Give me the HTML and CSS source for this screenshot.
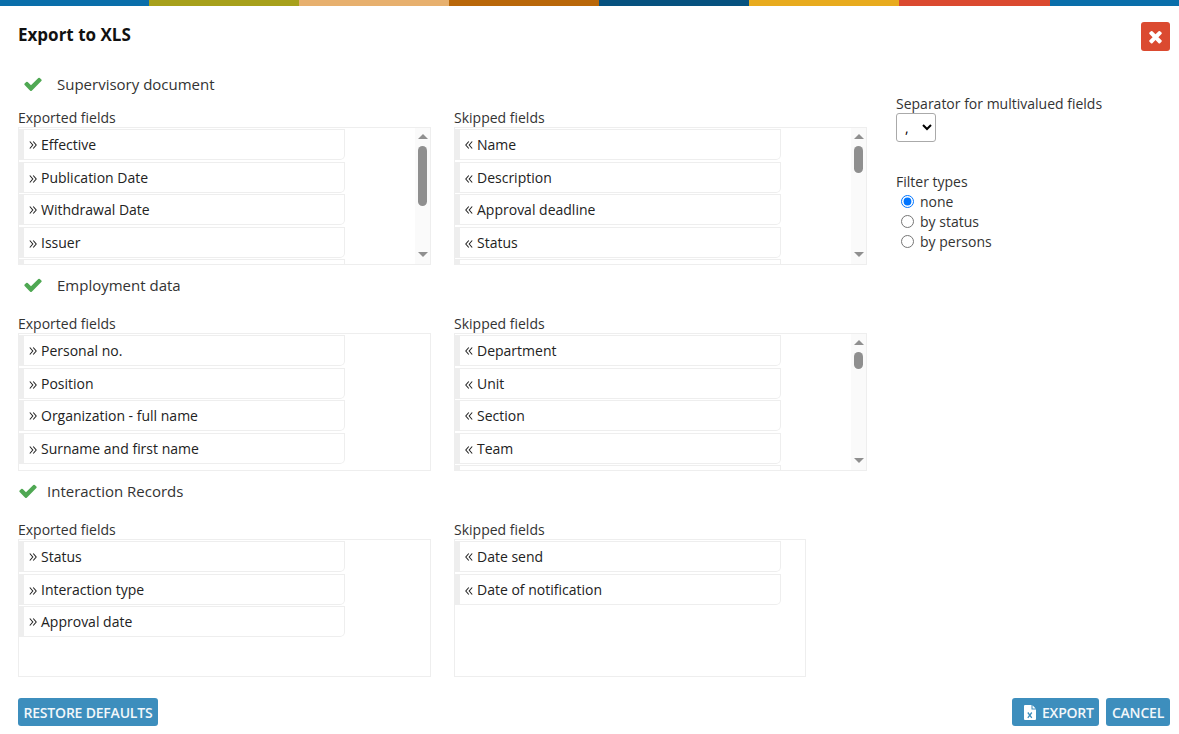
FILE: index.html
```html
<!DOCTYPE html>
<html lang="en">
<head>
<meta charset="utf-8">
<title>Export to XLS</title>
<link rel="stylesheet" href="styles.css">
</head>
<body>
<svg class="sprites" aria-hidden="true">
  <symbol id="ok" viewBox="0 0 1792 1792"><path d="M1671 566q0 40-28 68l-724 724-136 136q-28 28-68 28t-68-28l-136-136-362-362q-28-28-28-68t28-68l136-136q28-28 68-28t68 28l294 295 656-657q28-28 68-28t68 28l136 136q28 28 28 68z"/></symbol>
  <symbol id="right" viewBox="0 0 8 8"><path d="M.8 .5 3.8 4 .8 7.5M4.2 .5 7.2 4 4.2 7.5"/></symbol>
  <symbol id="left" viewBox="0 0 8 8"><path d="M3.8 .5 .8 4 3.8 7.5M7.2 .5 4.2 4 7.2 7.5"/></symbol>
</svg>
<div class="stripe">
  <span class="seg c1"></span><span class="seg c2"></span><span class="seg c3"></span><span class="seg c4"></span><span class="seg c5"></span><span class="seg c6"></span><span class="seg c7"></span><span class="seg c8"></span>
</div>
<header class="head">
  <h1 class="title">Export to XLS</h1>
  <button class="close" aria-label="Close">
    <svg class="close-icon" viewBox="0 0 1792 1792"><path d="M1490 1322q0 40-28 68l-136 136q-28 28-68 28t-68-28l-294-294-294 294q-28 28-68 28t-68-28l-136-136q-28-28-28-68t28-68l294-294-294-294q-28-28-28-68t28-68l136-136q28-28 68-28t68 28l294 294 294-294q28-28 68-28t68 28l136 136q28 28 28 68t-28 68l-294 294 294 294q28 28 28 68z"/></svg>
  </button>
</header>
<main class="content">
  <div class="sections">
    <section class="group first">
      <h2 class="group-title indented"><svg class="check"><use href="#ok"/></svg>Supervisory document</h2>
      <div class="cols">
        <div class="col">
          <div class="col-label">Exported fields</div>
          <div class="list">
            <ul class="items">
              <li class="item"><svg class="dir"><use href="#right"/></svg>Effective</li>
              <li class="item"><svg class="dir"><use href="#right"/></svg>Publication Date</li>
              <li class="item"><svg class="dir"><use href="#right"/></svg>Withdrawal Date</li>
              <li class="item"><svg class="dir"><use href="#right"/></svg>Issuer</li>
              <li class="item"></li>
            </ul>
            <div class="scrollbar"><span class="sb-btn"><i class="tri-up"></i></span><span class="thumb thumb-l"></span><span class="sb-btn sb-end"><i class="tri-down"></i></span></div>
          </div>
        </div>
        <div class="col">
          <div class="col-label">Skipped fields</div>
          <div class="list">
            <ul class="items">
              <li class="item"><svg class="dir"><use href="#left"/></svg>Name</li>
              <li class="item"><svg class="dir"><use href="#left"/></svg>Description</li>
              <li class="item"><svg class="dir"><use href="#left"/></svg>Approval deadline</li>
              <li class="item"><svg class="dir"><use href="#left"/></svg>Status</li>
              <li class="item"></li>
            </ul>
            <div class="scrollbar"><span class="sb-btn"><i class="tri-up"></i></span><span class="thumb thumb-m"></span><span class="sb-btn sb-end"><i class="tri-down"></i></span></div>
          </div>
        </div>
      </div>
    </section>
    <section class="group">
      <h2 class="group-title indented"><svg class="check"><use href="#ok"/></svg>Employment data</h2>
      <div class="cols">
        <div class="col">
          <div class="col-label">Exported fields</div>
          <div class="list">
            <ul class="items">
              <li class="item"><svg class="dir"><use href="#right"/></svg>Personal no.</li>
              <li class="item"><svg class="dir"><use href="#right"/></svg>Position</li>
              <li class="item"><svg class="dir"><use href="#right"/></svg>Organization - full name</li>
              <li class="item"><svg class="dir"><use href="#right"/></svg>Surname and first name</li>
            </ul>
          </div>
        </div>
        <div class="col">
          <div class="col-label">Skipped fields</div>
          <div class="list">
            <ul class="items">
              <li class="item"><svg class="dir"><use href="#left"/></svg>Department</li>
              <li class="item"><svg class="dir"><use href="#left"/></svg>Unit</li>
              <li class="item"><svg class="dir"><use href="#left"/></svg>Section</li>
              <li class="item"><svg class="dir"><use href="#left"/></svg>Team</li>
              <li class="item"></li>
            </ul>
            <div class="scrollbar"><span class="sb-btn"><i class="tri-up"></i></span><span class="thumb thumb-s"></span><span class="sb-btn sb-end"><i class="tri-down"></i></span></div>
          </div>
        </div>
      </div>
    </section>
    <section class="group">
      <h2 class="group-title"><svg class="check"><use href="#ok"/></svg>Interaction Records</h2>
      <div class="cols">
        <div class="col">
          <div class="col-label">Exported fields</div>
          <div class="list">
            <ul class="items">
              <li class="item"><svg class="dir"><use href="#right"/></svg>Status</li>
              <li class="item"><svg class="dir"><use href="#right"/></svg>Interaction type</li>
              <li class="item"><svg class="dir"><use href="#right"/></svg>Approval date</li>
            </ul>
          </div>
        </div>
        <div class="col">
          <div class="col-label">Skipped fields</div>
          <div class="list narrow">
            <ul class="items">
              <li class="item"><svg class="dir"><use href="#left"/></svg>Date send</li>
              <li class="item"><svg class="dir"><use href="#left"/></svg>Date of notification</li>
            </ul>
          </div>
        </div>
      </div>
    </section>
  </div>
  <aside class="options">
    <label class="opt-label" for="sep">Separator for multivalued fields</label>
    <select class="sep" id="sep"><option>,</option><option>;</option></select>
    <div class="opt-label filter-label">Filter types</div>
    <label class="radio-row"><input class="radio" type="radio" name="filter" checked>none</label>
    <label class="radio-row"><input class="radio" type="radio" name="filter">by status</label>
    <label class="radio-row"><input class="radio" type="radio" name="filter">by persons</label>
  </aside>
</main>
<footer class="foot">
  <button class="btn">RESTORE DEFAULTS</button>
  <div class="foot-right">
    <button class="btn btn-export">
      <svg class="xls" viewBox="0 0 12 15"><path class="xls-page" fill-rule="evenodd" d="M1 0h6.5v4.5H12V14a1 1 0 0 1-1 1H1a1 1 0 0 1-1-1V1a1 1 0 0 1 1-1zM8.5 0.3 11.7 3.5H8.5z"/><path class="xls-x" d="M3.8 7.5 7.8 12.8M7.8 7.5 3.8 12.8"/></svg>EXPORT
    </button>
    <button class="btn btn-cancel">CANCEL</button>
  </div>
</footer>
</body>
</html>
```

FILE: styles.css
```css
* { box-sizing: border-box; }
html, body { margin: 0; padding: 0; }
body {
  width: 1179px;
  height: 734px;
  overflow: hidden;
  background: #fff;
  color: #222;
  font-family: "Open Sans", "Liberation Sans", sans-serif;
  font-size: 14px;
  line-height: 19px;
}
.sprites { display: none; }
.stripe { display: flex; height: 6px; }
.seg { width: 150px; flex: none; }
.c1 { width: 149px; background: #0a6eaa; }
.c2 { background: #a7a01b; }
.c3 { background: #e7b06e; }
.c4 { background: #b96709; }
.c5 { background: #06527f; }
.c6 { background: #e8ab1e; }
.c7 { background: #db4a30; width: 151px; }
.c8 { background: #0a6eaa; width: 130px; }

.head {
  display: flex;
  justify-content: space-between;
  align-items: flex-start;
  height: 63px;
  padding: 16px 9px 0 18px;
}
.title { margin: 1px 0 0; font-size: 17px; line-height: 24px; font-weight: 700; color: #111; }
.close {
  width: 29px;
  height: 29px;
  padding: 0;
  border: 0;
  border-radius: 3px;
  background: #db4a30;
  display: flex;
  align-items: center;
  justify-content: center;
}
.close-icon { width: 19px; height: 19px; fill: #fff; }

.content { display: flex; height: 629px; padding-left: 18px; }
.sections { width: 849px; flex: none; }
.group { margin-top: 5px; }
.group.first { margin-top: 0; }
.group-title {
  display: flex;
  align-items: center;
  height: 30px;
  margin: 0 0 14px;
  font-size: 15px;
  font-weight: 400;
  color: #333;
}
.first .group-title { margin-bottom: 9px; }
.indented { padding-left: 5px; }
.check { width: 20px; height: 20px; margin-right: 14px; fill: #4fa853; flex: none; }
.group-title:not(.indented) .check { margin-right: 9px; }
.cols { display: flex; gap: 23px; }
.col { width: 413px; flex: none; }
.col-label { height: 19px; color: #333; }
.list {
  display: flex;
  height: 138px;
  border: 1px solid #eee;
}
.list.narrow { width: 352px; }
.items {
  flex: 1;
  min-width: 0;
  margin: 0;
  padding: 1px 0 0;
  list-style: none;
  overflow: hidden;
}
.item {
  display: flex;
  align-items: center;
  width: 326px;
  height: 31px;
  margin-bottom: 1.5px;
  padding: 0 0 1px 5px;
  border: 1px solid #eee;
  border-left: 5px solid #eee;
  border-radius: 0 0 5px 0;
  color: #222;
}
.item:nth-child(even) { padding: 1px 0 0 5px; }
.dir {
  width: 8px;
  height: 8px;
  margin: 2px 4px 0 0;
  flex: none;
  fill: none;
  stroke: #222;
  stroke-width: 1.05;
}
.scrollbar {
  display: flex;
  flex-direction: column;
  align-items: center;
  width: 15px;
  flex: none;
  background: #fafafa;
}
.sb-btn { display: flex; justify-content: center; width: 100%; height: 18px; padding-top: 6px; }
.sb-end { margin-top: auto; height: 12px; padding-top: 0; }
.tri-up { width: 0; height: 0; border: 5px solid transparent; border-top: 0; border-bottom-color: #8f8f8f; }
.tri-down { width: 0; height: 0; border: 5px solid transparent; border-bottom: 0; border-top-color: #8f8f8f; }
.thumb { width: 9px; border-radius: 5px; background: #8f8f8f; }
.thumb-l { height: 60px; }
.thumb-m { height: 27px; }
.thumb-s { height: 17px; }

.options { padding-top: 25px; margin-left: 29px; width: 283px; }
.opt-label { display: block; color: #333; }
.sep {
  display: block;
  width: 40px;
  height: 29px;
  padding: 0 0 0 4px;
  background: #fff;
  border: 1px solid #aaa;
  border-radius: 3px;
  font-family: inherit;
  font-size: 14px;
}
.filter-label { margin-top: 30px; }
.radio-row { display: flex; align-items: center; height: 20px; color: #333; }
.radio { width: 13px; height: 13px; margin: 0 6px 0 5px; flex: none; }

.foot {
  display: flex;
  justify-content: space-between;
  padding: 0 9px 0 18px;
}
.foot-right { display: flex; gap: 7px; }
.btn {
  height: 28px;
  padding: 0 5px;
  border: 0;
  border-radius: 3px;
  background: #3d8ebd;
  color: #f2f7fa;
  font-family: inherit;
  font-size: 14px;
  font-weight: 600;
  letter-spacing: -.2px;
  display: flex;
  align-items: center;
  justify-content: center;
}
.foot > .btn { width: 140px; }
.btn-export { width: 87px; padding: 0 5px 0 12px; justify-content: flex-start; }
.btn-cancel { width: 64px; padding: 0; }
.xls { width: 12px; height: 15px; margin-right: 6px; }
.xls-page { fill: #fff; }
.xls-x { fill: none; stroke: #3d8ebd; stroke-width: 1.3; }
```
